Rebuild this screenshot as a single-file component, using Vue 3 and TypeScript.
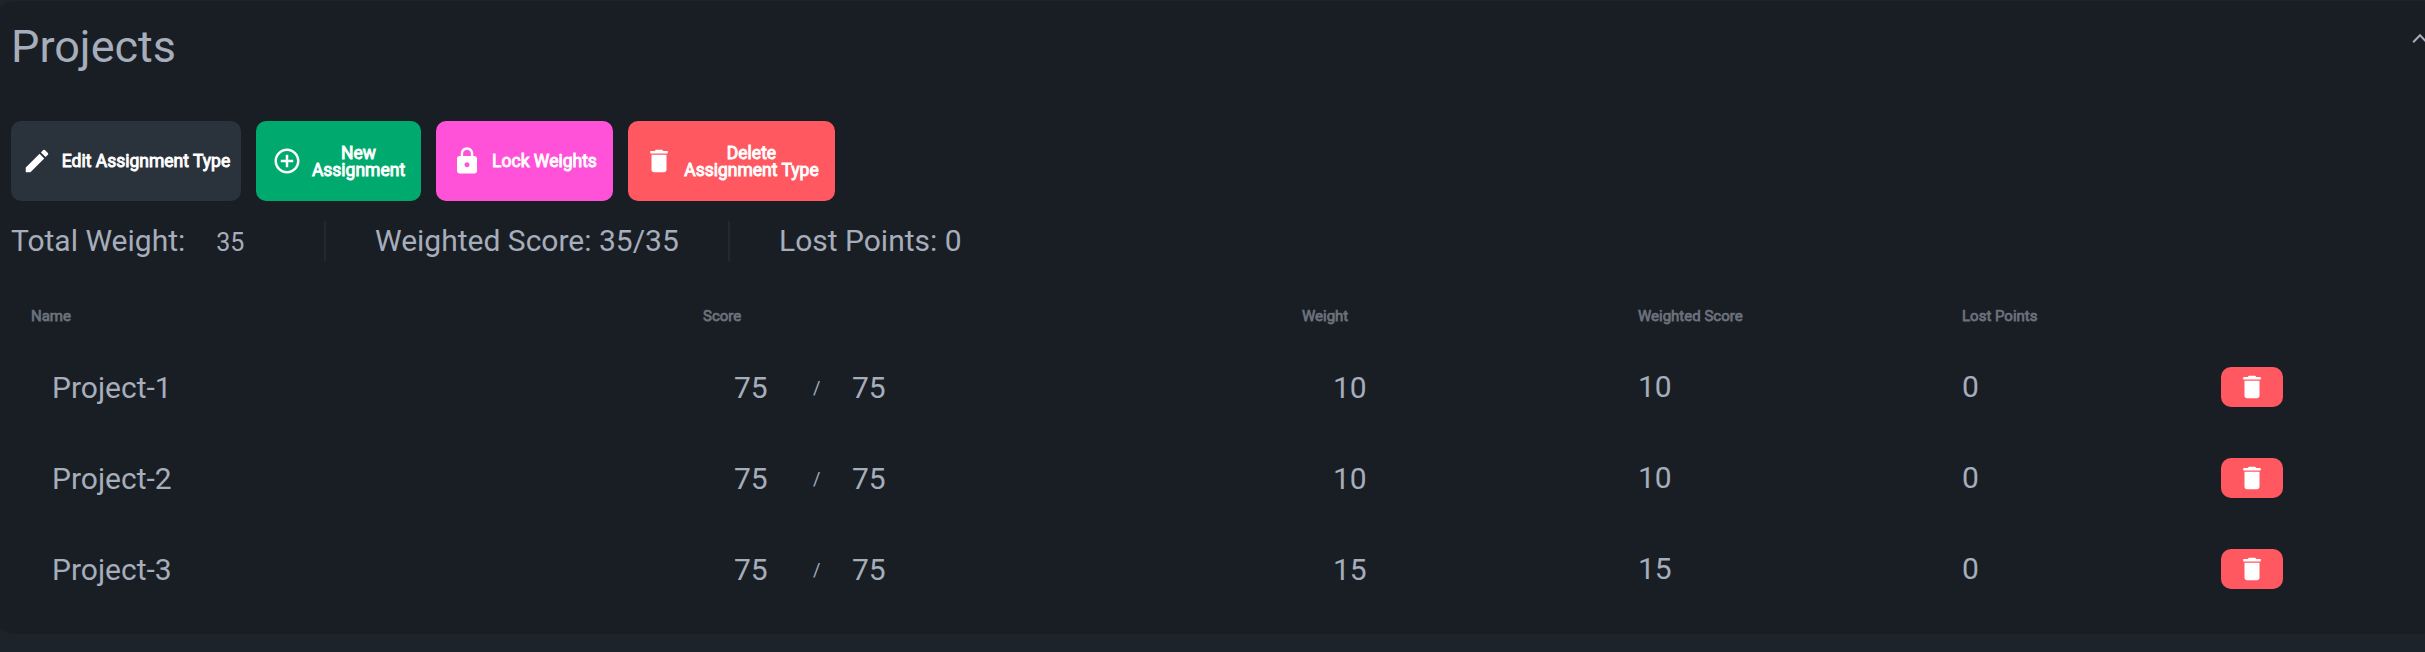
<script setup lang="ts">
interface Project {
  name: string
  score: number
  outOf: number
  weight: number
  weightedScore: number
  lostPoints: number
}

interface Action {
  kind: string
  lines: string[]
  icon: string
}

const icons = {
  edit: 'M3 17.25V21h3.75L17.81 9.94l-3.75-3.75L3 17.25zM20.71 7.04a.996.996 0 0 0 0-1.41l-2.34-2.34a.996.996 0 0 0-1.41 0l-1.83 1.83 3.75 3.75 1.83-1.83z',
  add: 'M13 7h-2v4H7v2h4v4h2v-4h4v-2h-4V7zm-1-5C6.48 2 2 6.48 2 12s4.48 10 10 10 10-4.48 10-10S17.52 2 12 2zm0 18c-4.41 0-8-3.59-8-8s3.59-8 8-8 8 3.59 8 8-3.59 8-8 8z',
  lock: 'M18 8h-1V6c0-2.76-2.24-5-5-5S7 3.24 7 6v2H6c-1.1 0-2 .9-2 2v10c0 1.1.9 2 2 2h12c1.1 0 2-.9 2-2V10c0-1.1-.9-2-2-2zm-6 9c-1.1 0-2-.9-2-2s.9-2 2-2 2 .9 2 2-.9 2-2 2zm3.1-9H8.9V6c0-1.71 1.39-3.1 3.1-3.1 1.71 0 3.1 1.39 3.1 3.1v2z',
  trash: 'M6 19c0 1.1.9 2 2 2h8c1.1 0 2-.9 2-2V7H6v12zM19 4h-3.5l-1-1h-5l-1 1H5v2h14V4z',
}

const actions: Action[] = [
  { kind: 'edit', lines: ['Edit Assignment Type'], icon: icons.edit },
  { kind: 'new', lines: ['New', 'Assignment'], icon: icons.add },
  { kind: 'lock', lines: ['Lock Weights'], icon: icons.lock },
  { kind: 'delete', lines: ['Delete', 'Assignment Type'], icon: icons.trash },
]

const projects: Project[] = [
  { name: 'Project-1', score: 75, outOf: 75, weight: 10, weightedScore: 10, lostPoints: 0 },
  { name: 'Project-2', score: 75, outOf: 75, weight: 10, weightedScore: 10, lostPoints: 0 },
  { name: 'Project-3', score: 75, outOf: 75, weight: 15, weightedScore: 15, lostPoints: 0 },
]
</script>

<template>
  <main class="page">
    <section class="card">
      <header class="title-bar">
        <h1>Projects</h1>
        <svg class="chevron" viewBox="0 0 16 12"><path d="M1.2 9.3 8 2.3l6.8 7" /></svg>
      </header>

      <div class="actions">
        <button v-for="a in actions" :key="a.kind" class="btn" :class="a.kind">
          <svg viewBox="0 0 24 24"><path :d="a.icon" /></svg>
          <span class="label"><span v-for="l in a.lines" :key="l">{{ l }}</span></span>
        </button>
      </div>

      <div class="summary">
        <div class="stat total">Total Weight:<span class="total-value">35</span></div>
        <div class="stat weighted">Weighted Score: 35/35</div>
        <div class="stat">Lost Points: 0</div>
      </div>

      <div class="table">
        <div class="row head">
          <span>Name</span><span>Score</span><span>Weight</span><span>Weighted Score</span><span>Lost Points</span>
        </div>
        <div v-for="p in projects" :key="p.name" class="row">
          <span class="field">{{ p.name }}</span>
          <span class="score">
            <span class="points">{{ p.score }}</span>
            <span class="slash">/</span>
            <span>{{ p.outOf }}</span>
          </span>
          <span class="field weight">{{ p.weight }}</span>
          <span class="plain">{{ p.weightedScore }}</span>
          <span class="plain">{{ p.lostPoints }}</span>
          <button class="remove" aria-label="Delete">
            <svg viewBox="0 0 24 24"><path :d="icons.trash" /></svg>
          </button>
        </div>
      </div>
    </section>
  </main>
</template>

<style>
body {
  margin: 0;
  background: #1d232a;
}
</style>

<style scoped>
.page {
  box-sizing: border-box;
  height: 652px;
  padding-top: 1px;
  overflow: hidden;
  background: #1d232a;
  color: #a6adbb;
  font-family: Roboto, sans-serif;
}
.card {
  box-sizing: border-box;
  height: 633px;
  width: 2445px;
  margin-left: -5px;
  padding-left: 16px;
  border-radius: 20px;
  background: #191e24;
}
.title-bar {
  display: flex;
  justify-content: space-between;
  height: 120px;
}
h1 {
  margin: 19px 0 0;
  font-size: 45px;
  line-height: 53px;
  font-weight: 400;
}
.chevron {
  width: 16px;
  height: 12px;
  margin: 32px 12px 0 0;
  fill: none;
  stroke: currentColor;
  stroke-width: 2;
}
.actions {
  display: flex;
  gap: 15px;
}
.btn {
  display: flex;
  align-items: center;
  justify-content: center;
  gap: 10px;
  box-sizing: border-box;
  height: 80px;
  padding: 0;
  border: 0;
  border-radius: 10px;
  color: #fff;
  font: 400 17.5px/17px Roboto, sans-serif;
  -webkit-text-stroke: 0.9px currentColor;
}
.btn svg {
  flex: none;
  width: 30px;
  height: 30px;
  fill: currentColor;
}
.label {
  display: flex;
  flex-direction: column;
  align-items: center;
  padding-top: 1px;
  white-space: nowrap;
}
.edit { width: 230px; background: #2a323c; }
.new { width: 165px; background: #00a96e; }
.lock { width: 177px; background: #ff52d9; }
.delete { width: 207px; background: #ff5861; }
.summary {
  display: flex;
  height: 40px;
  margin-top: 20px;
  font-size: 30px;
  line-height: 40px;
}
.stat + .stat {
  padding-left: 49px;
  border-left: 2px solid #242931;
}
.total {
  box-sizing: border-box;
  width: 313px;
}
.total-value {
  margin-left: 31px;
  font-size: 25px;
}
.weighted {
  box-sizing: border-box;
  width: 404px;
}
.table {
  margin-top: 34px;
}
.row {
  display: grid;
  grid-template-columns: 672px 599px 336px 324px 259px 62px;
  align-items: center;
  height: 91px;
  padding-left: 20px;
  font-size: 30px;
  line-height: 40px;
}
.head {
  height: 42px;
  padding-bottom: 4px;
  color: #6c727d;
  font-size: 15px;
  line-height: 20px;
  font-weight: 400;
  -webkit-text-stroke: 0.75px currentColor;
}
.field {
  padding: 2px 0 0 21px;
}
.weight {
  padding-left: 31px;
}
.score {
  display: flex;
  align-items: center;
  padding: 2px 0 0 31px;
}
.points {
  width: 79px;
}
.slash {
  width: 39px;
  font-size: 18px;
}
.remove {
  display: flex;
  align-items: center;
  justify-content: center;
  width: 62px;
  height: 40px;
  padding: 0;
  border: 0;
  border-radius: 10px;
  background: #ff5861;
}
.remove svg {
  width: 30px;
  height: 30px;
  fill: #fff;
}
</style>
